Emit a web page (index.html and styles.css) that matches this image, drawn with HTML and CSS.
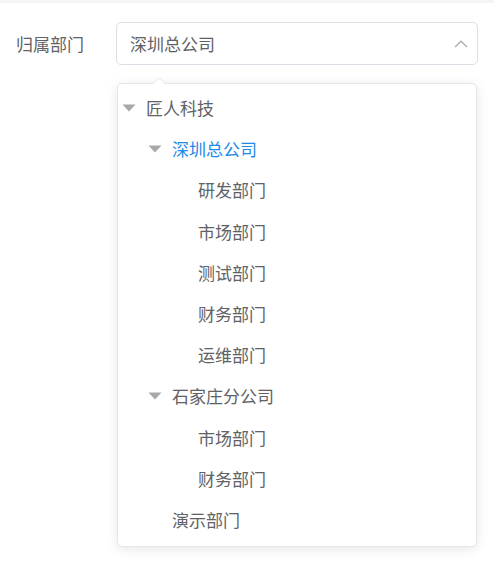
FILE: index.html
```html
<!DOCTYPE html>
<html lang="zh-CN">
<head>
<meta charset="utf-8">
<link rel="stylesheet" href="styles.css">
</head>
<body>
<div class="topbar"></div>
<div class="form-row">
  <label class="label">归属部门</label>
  <div class="field">
    <div class="input">
      <span class="value">深圳总公司</span>
      <svg class="chev" width="14" height="8" viewBox="0 0 14 8"><path d="M1 7 L7 1.2 L13 7" fill="none" stroke="#a8abb2" stroke-width="1.3"/></svg>
    </div>
    <div class="dropdown">
      <div class="arrow"></div>
      <div class="node lv1"><svg class="tri" width="14" height="8" viewBox="0 0 14 8"><path d="M0.5 0.5 H13.5 L7 7.5 Z" fill="#a8a8a8"/></svg><span>匠人科技</span></div>
      <div class="node lv2 active"><svg class="tri" width="14" height="8" viewBox="0 0 14 8"><path d="M0.5 0.5 H13.5 L7 7.5 Z" fill="#a8a8a8"/></svg><span>深圳总公司</span></div>
      <div class="node lv3"><i class="sp"></i><span>研发部门</span></div>
      <div class="node lv3"><i class="sp"></i><span>市场部门</span></div>
      <div class="node lv3"><i class="sp"></i><span>测试部门</span></div>
      <div class="node lv3"><i class="sp"></i><span>财务部门</span></div>
      <div class="node lv3"><i class="sp"></i><span>运维部门</span></div>
      <div class="node lv2"><svg class="tri" width="14" height="8" viewBox="0 0 14 8"><path d="M0.5 0.5 H13.5 L7 7.5 Z" fill="#a8a8a8"/></svg><span>石家庄分公司</span></div>
      <div class="node lv3"><i class="sp"></i><span>市场部门</span></div>
      <div class="node lv3"><i class="sp"></i><span>财务部门</span></div>
      <div class="node lv2"><i class="sp"></i><span>演示部门</span></div>
    </div>
  </div>
</div>
</body>
</html>
```
FILE: styles.css
```css
html, body {
  margin: 0;
  padding: 0;
  background: #fff;
}
body {
  font-family: "Noto Sans CJK SC", "Microsoft YaHei", sans-serif;
  font-size: 17px;
  color: #606266;
  width: 494px;
  height: 562px;
  overflow: hidden;
}
.topbar {
  height: 3px;
  background: #f5f5f5;
}
.form-row {
  display: flex;
  align-items: flex-start;
  padding: 19px 16px 0 16px;
}
.label {
  width: 100px;
  height: 43px;
  line-height: 43px;
  color: #606266;
}
.field {
  width: 362px;
  display: flex;
  flex-direction: column;
  align-items: center;
}
.input {
  box-sizing: border-box;
  width: 362px;
  height: 43px;
  border: 1px solid #dcdfe6;
  border-radius: 5px;
  display: flex;
  align-items: center;
  justify-content: space-between;
  padding: 0 9px 0 13px;
}
.value {
  color: #606266;
}
.chev {
  display: block;
}
.dropdown {
  position: relative;
  box-sizing: border-box;
  width: 360px;
  margin-top: 18px;
  border: 1px solid #e4e7ed;
  border-radius: 5px;
  background: #fff;
  box-shadow: 0 2px 12px rgba(0, 0, 0, 0.1);
  padding: 3px 0 6px 0;
}
.arrow {
  position: absolute;
  top: -5px;
  left: 36px;
  width: 9px;
  height: 9px;
  background: #fff;
  border-top: 1px solid #e4e7ed;
  border-left: 1px solid #e4e7ed;
  transform: rotate(45deg);
  border-top-left-radius: 2px;
}
.node {
  height: 41.2px;
  display: flex;
  align-items: center;
  white-space: nowrap;
}
.lv1 { padding-left: 4px; }
.lv2 { padding-left: 30px; }
.lv3 { padding-left: 56px; }
.tri, .sp {
  display: block;
  width: 14px;
  height: 8px;
  margin-right: 10px;
  flex: none;
}
.active span {
  color: #2189e8;
}
```
